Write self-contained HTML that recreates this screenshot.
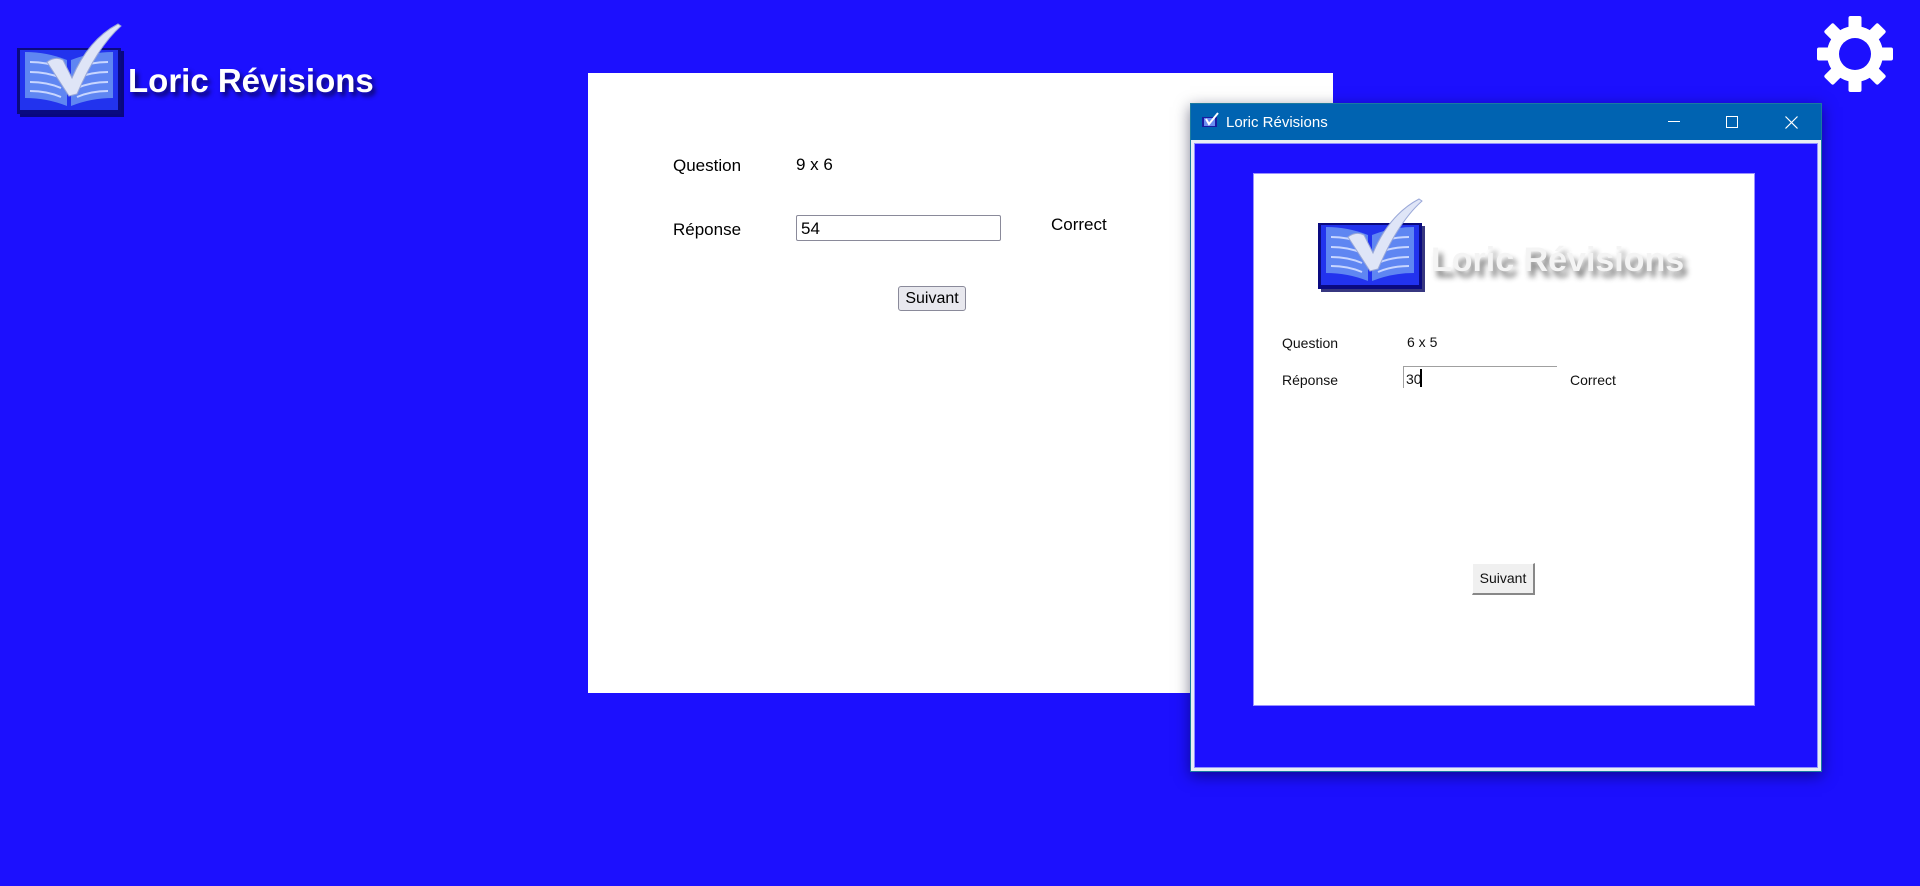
<!DOCTYPE html>
<html><head><meta charset="utf-8"><style>
*{margin:0;padding:0;box-sizing:border-box}
body{width:1920px;height:886px;background:#1c10fe;position:relative;overflow:hidden;font-family:"Liberation Sans",sans-serif}
.abs{position:absolute}
.t{position:absolute;font-size:17px;color:#000;line-height:1}
.s{position:absolute;font-size:14px;color:#111;line-height:1}
</style></head><body>

<!-- top-left logo -->
<svg class="abs" style="left:17px;top:22px" width="380" height="100" viewBox="0 0 380 100">
<defs><filter id="sh" x="-10%" y="-30%" width="130%" height="170%"><feGaussianBlur stdDeviation="2.5"/></filter></defs>
<g id="book">
<rect x="3" y="29" width="104" height="66" fill="#050560" opacity="0.8"/>
<rect x="0" y="26" width="104" height="66" fill="#0a0a80"/>
<rect x="3" y="28" width="98" height="60" fill="#2233ee"/>
<path d="M8,30 Q30,30 50,38 L50,84 Q30,76 8,76Z" fill="#5f86f2"/>
<path d="M96,30 Q74,30 54,38 L54,84 Q74,76 96,76Z" fill="#5f86f2"/>
<g stroke="#c8d6ff" stroke-width="2" fill="none">
<path d="M13,40 Q30,40 44,46M13,50 Q30,50 44,56M13,60 Q30,60 44,66M13,69 Q30,69 44,75"/>
<path d="M91,40 Q74,40 60,46M91,50 Q74,50 60,56M91,60 Q74,60 60,66M91,69 Q74,69 60,75"/>
</g>
<path d="M30,40 Q38,34 46,38 L55,56 C66,30 82,12 101,2 L104,4 C86,20 72,44 60,72 L52,74 Z" fill="#dfe5f7" stroke="#9aa8d8" stroke-width="1"/>
</g>
<text x="114" y="74" font-size="33" font-weight="bold" font-family="Liberation Sans" fill="#000" opacity="0.6" filter="url(#sh)">Loric Révisions</text>
<text x="111" y="70" font-size="33" font-weight="bold" font-family="Liberation Sans" fill="#fff">Loric Révisions</text>
</svg>

<!-- gear -->
<svg class="abs" style="left:1815px;top:14px" width="80" height="80" viewBox="-40 -40 80 80">
<g fill="#fff">
<circle r="28"/>
<rect x="-6.5" y="-38" width="13" height="76" rx="2"/>
<rect x="-6.5" y="-38" width="13" height="76" rx="2" transform="rotate(45)"/>
<rect x="-6.5" y="-38" width="13" height="76" rx="2" transform="rotate(90)"/>
<rect x="-6.5" y="-38" width="13" height="76" rx="2" transform="rotate(135)"/>
</g>
<circle r="16" fill="#1c10fe"/>
</svg>

<!-- main panel -->
<div class="abs" style="left:588px;top:73px;width:745px;height:620px;background:#fff"></div>
<div class="t" style="left:673px;top:157px">Question</div>
<div class="t" style="left:796px;top:156px">9 x 6</div>
<div class="t" style="left:673px;top:221px">Réponse</div>
<div class="abs" style="left:796px;top:215px;width:205px;height:26px;border:1px solid #8a8a9a;border-radius:2px;background:#fff"></div>
<div class="t" style="left:801px;top:220px">54</div>
<div class="t" style="left:1051px;top:216px">Correct</div>
<div class="abs" style="left:898px;top:286px;width:68px;height:25px;border:1px solid #8a8a9a;border-radius:3px;background:#e8e8ee;font-size:16px;text-align:center;line-height:23px">Suivant</div>

<!-- window -->
<div class="abs" style="left:1190px;top:103px;width:632px;height:669px;background:#0063b1;border:1px solid #1a7aa0;box-shadow:0 4px 14px rgba(0,0,40,.5)"></div>
<div class="abs" style="left:1191px;top:140px;width:630px;height:631px;background:#e8eef4;padding:2px"></div>
<div class="abs" style="left:1194px;top:143px;width:624px;height:625px;background:#1c10fe;border:1px solid #9090ff"></div>
<svg class="abs" style="left:1202px;top:112px" width="18" height="16" viewBox="0 0 18 16">
<rect x="0" y="5" width="15" height="10" fill="#1a1aa0"/><rect x="2" y="6" width="11" height="8" fill="#6a8cf0"/>
<path d="M4,7 L7,12 L16,1" stroke="#fff" stroke-width="2" fill="none"/></svg>
<div class="abs" style="left:1226px;top:114px;color:#fff;font-size:15px">Loric Révisions</div>
<div class="abs" style="left:1668px;top:121px;width:12px;height:1px;background:#fff"></div>
<div class="abs" style="left:1726px;top:116px;width:12px;height:12px;border:1px solid #fff"></div>
<svg class="abs" style="left:1785px;top:116px" width="13" height="13"><path d="M0.5,0.5 L12.5,12.5 M12.5,0.5 L0.5,12.5" stroke="#fff" stroke-width="1.2"/></svg>

<div class="abs" style="left:1253px;top:173px;width:502px;height:533px;background:#fff;border:1px solid #9a90ff"></div>
<svg class="abs" style="left:1318px;top:197px" width="380" height="100" viewBox="0 0 380 100">
<defs><filter id="sh2" x="-10%" y="-30%" width="130%" height="170%"><feGaussianBlur stdDeviation="3"/></filter></defs>
<use href="#book"/>
<text x="117" y="80" font-size="34" font-weight="bold" font-family="Liberation Sans" fill="#444" opacity="0.7" filter="url(#sh2)">Loric Révisions</text>
<text x="113" y="74" font-size="34" font-weight="bold" font-family="Liberation Sans" fill="#f4f4f4">Loric Révisions</text>
</svg>

<div class="s" style="left:1282px;top:336px">Question</div>
<div class="s" style="left:1407px;top:335px">6 x 5</div>
<div class="s" style="left:1282px;top:373px">Réponse</div>
<div class="abs" style="left:1403px;top:366px;width:154px;height:22px;border-top:1px solid #a0a0a0;border-left:1px solid #a0a0a0"></div>
<div class="s" style="left:1406px;top:372px">30</div>
<div class="abs" style="left:1420px;top:369px;width:2px;height:18px;background:#000"></div>
<div class="s" style="left:1570px;top:373px">Correct</div>
<div class="abs" style="left:1472px;top:563px;width:63px;height:32px;background:#f0f0f0;border:1px solid #fff;border-right:2px solid #888;border-bottom:2px solid #888;font-size:14px;text-align:center;line-height:29px;color:#111">Suivant</div>

</body></html>
